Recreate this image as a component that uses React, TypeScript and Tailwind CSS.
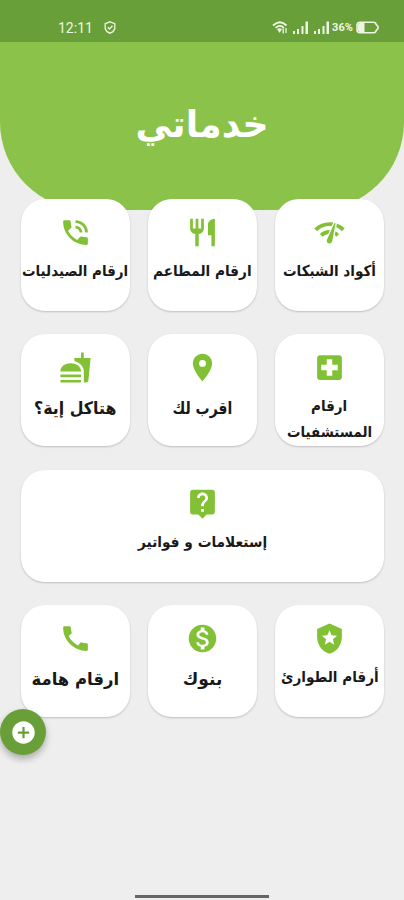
import { useLayoutEffect, useRef, useState } from "react";
import type { IconType } from "react-icons";
import {
  MdAddCircle,
  MdCall,
  MdFastfood,
  MdLiveHelp,
  MdLocalHospital,
  MdLocalPolice,
  MdMonetizationOn,
  MdNetworkCheck,
  MdPhoneInTalk,
  MdPlace,
  MdRestaurant,
} from "react-icons/md";

type FitProps = { text: string; width: number; className?: string };

// Condenses a single line of text to the given width.
function Fit({ text, width, className = "" }: FitProps) {
  const ref = useRef<HTMLSpanElement>(null);
  const [scale, setScale] = useState(1);
  useLayoutEffect(() => {
    if (ref.current) setScale(width / ref.current.offsetWidth);
  }, [text, width]);
  return (
    <span className="flex justify-center" style={{ width }}>
      <span
        ref={ref}
        className={`shrink-0 whitespace-nowrap ${className}`}
        style={{ transform: `scaleX(${scale})` }}
      >
        {text}
      </span>
    </span>
  );
}

type Line = { text: string; width: number };
type Service = { icon: IconType; lines: Line[]; wide?: boolean; large?: boolean };

const services: Service[] = [
  { icon: MdNetworkCheck, lines: [{ text: "أكواد الشبكات", width: 93 }] },
  { icon: MdRestaurant, lines: [{ text: "ارقام المطاعم", width: 99 }] },
  { icon: MdPhoneInTalk, lines: [{ text: "ارقام الصيدليات", width: 106 }] },
  {
    icon: MdLocalHospital,
    lines: [
      { text: "ارقام", width: 36 },
      { text: "المستشفيات", width: 85 },
    ],
  },
  { icon: MdPlace, large: true, lines: [{ text: "اقرب لك", width: 60 }] },
  { icon: MdFastfood, large: true, lines: [{ text: "هتاكل إية؟", width: 82 }] },
  { icon: MdLiveHelp, wide: true, lines: [{ text: "إستعلامات و فواتير", width: 129 }] },
  { icon: MdLocalPolice, lines: [{ text: "أرقام الطوارئ", width: 98 }] },
  { icon: MdMonetizationOn, large: true, lines: [{ text: "بنوك", width: 40 }] },
  { icon: MdCall, large: true, lines: [{ text: "ارقام هامة", width: 88 }] },
];

function Card({ icon: Icon, lines, wide, large }: Service) {
  return (
    <div
      className={`flex h-[112px] flex-col items-center rounded-3xl bg-white pt-[17px] shadow-[0_1px_2px_rgba(0,0,0,0.2)] ${wide ? "col-span-3" : ""}`}
    >
      <Icon className="size-[33px] shrink-0 text-[#82c135]" />
      <div
        className={`flex flex-col items-center font-bold leading-[26px] text-[#191919] ${large ? "pt-[11px] text-[17px]" : "pt-[9px] text-[15px]"}`}
      >
        {lines.map((line) => (
          <Fit key={line.text} text={line.text} width={line.width} />
        ))}
      </div>
    </div>
  );
}

function Signal() {
  return (
    <svg viewBox="0 0 16 13" className="h-[13px] w-4" fill="currentColor">
      <path d="M0 10h2v3H0zM4 8h2v5H4zM8.500 5h2v8h-2zM12.500 0.500h2.500v12.500h-2.500z" />
    </svg>
  );
}

function StatusBar() {
  return (
    <div
      dir="ltr"
      className="flex h-[42px] shrink-0 items-center justify-between bg-[#689f38] pr-[25px] pl-[58px] pt-[13px] text-[#eef6e3]"
    >
      <div className="flex items-center gap-[11px]">
        <span className="font-['Roboto'] text-[14px] leading-4">12:11</span>
        <svg viewBox="0 0 12 13" className="h-[13px] w-3" fill="none" stroke="currentColor" strokeWidth="1.3">
          <path d="M6 .8 10.800 2.700v5L9 10.700l-3 1.500-3-1.500-1.800-3v-5z" />
          <path d="m3.800 6.300 1.700 1.700 3-3.300" />
        </svg>
      </div>
      <div className="flex items-center">
        <svg viewBox="0 0 16 13" className="mr-[5px] h-[13px] w-4" fill="none" stroke="currentColor">
          <path d="M1 4.500Q8-2 14.500 4.500" strokeWidth="2" />
          <path d="M3.500 6.800Q8 3 12 6.800" strokeWidth="1.600" />
          <path d="m5 8 2.500 4L10 8Q7.500 6.500 5 8z" fill="currentColor" stroke="none" />
          <path d="M11.200 7.500v5M14 7v5" strokeWidth="1.300" />
        </svg>
        <Signal />
        <span className="w-[5px]" />
        <Signal />
        <span className="ml-[2px] flex w-[21px] justify-center font-['Roboto'] text-[11px] font-bold leading-3">36%</span>
        <svg viewBox="0 0 23 13" className="ml-[3px] h-[13px] w-[23px]" fill="none">
          <path
            d="M4 1.200h13q3 0 3 2l2 2.300v2l-2 2.300q0 2-3 2H4q-3 0-3-3V4.200q0-3 3-3z"
            stroke="currentColor"
            strokeWidth="1.600"
          />
          <path d="M4 2h4.500v9H4Q2 11 2 9V4Q2 2 4 2z" fill="currentColor" />
        </svg>
      </div>
    </div>
  );
}

export default function App() {
  return (
    <div
      dir="rtl"
      className="relative flex h-[900px] w-[404px] flex-col overflow-hidden bg-[#eee] font-['DejaVu_Sans',sans-serif]"
    >
      <StatusBar />
      <header className="flex h-[168px] shrink-0 justify-center rounded-b-[88px] bg-[#8bc34a] pt-[55px] text-white">
        <Fit text="خدماتي" width={133} className="text-[37px] font-bold leading-[56px]" />
      </header>
      <main className="-mt-[11px] grid grid-cols-3 gap-x-[18px] gap-y-[23.300px] pr-5 pl-[21px]">
        {services.map((service) => (
          <Card key={service.lines[0].text} {...service} />
        ))}
      </main>
      <button
        aria-label="إضافة"
        className="absolute top-[709px] left-0 flex size-[46px] items-center justify-center rounded-full bg-[#689f38] text-white shadow-[0_4px_7px_rgba(0,0,0,0.28)]"
      >
        <MdAddCircle className="size-[27px]" />
      </button>
      <div className="mx-auto mt-auto mb-[2px] h-[3px] w-[134px] bg-[#666]" />
    </div>
  );
}
